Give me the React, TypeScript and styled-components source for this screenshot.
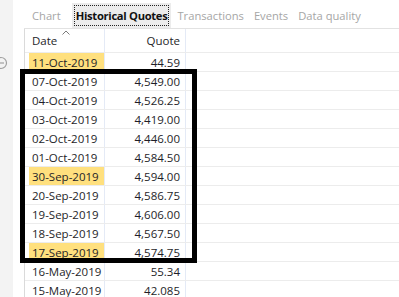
import styled, { createGlobalStyle } from "styled-components";

const GlobalStyle = createGlobalStyle`
  html, body {
    margin: 0;
    padding: 0;
    background: #ffffff;
  }
  body {
    font-family: "Open Sans", "Noto Sans", sans-serif;
    font-size: 11.5px;
    color: #1e1e28;
  }
`;

const Page = styled.div`
  position: relative;
  display: flex;
  width: 399px;
  height: 297px;
  overflow: hidden;
`;

const Rail = styled.aside`
  width: 13px;
  flex-shrink: 0;
  background: #f3f3f3;
  padding-top: 56px;
  box-sizing: border-box;
`;

const RailIcon = styled.svg`
  display: block;
  margin-left: -6px;
`;

const Gutter = styled.div`
  width: 11px;
  flex-shrink: 0;
`;

const Main = styled.main`
  flex: 1;
  display: flex;
  flex-direction: column;
  min-width: 0;
`;

const TabBar = styled.nav`
  height: 28px;
  display: flex;
  align-items: flex-end;
  padding-left: 3px;
  border-bottom: 1px solid #e2e2e2;
  flex-shrink: 0;
  font-size: 11.2px;
`;

const Tab = styled.div<{ $active?: boolean }>`
  height: 25px;
  display: flex;
  align-items: center;
  white-space: nowrap;
  padding: ${(p) => (p.$active ? "0 2px" : "0 5px")};
  margin: ${(p) => (p.$active ? "0 1px 0 6px" : "0")};
  background: ${(p) => (p.$active ? "#ececec" : "transparent")};
  color: ${(p) => (p.$active ? "#111111" : "#a6a6a6")};
  font-weight: ${(p) => (p.$active ? 700 : 400)};
  letter-spacing: ${(p) => (p.$active ? "-0.3px" : "0")};
`;

const Focus = styled.span`
  border: 1px dotted #222;
  padding: 0 1px;
  height: 19px;
  line-height: 19px;
`;

const Grid = styled.div`
  display: flex;
  flex-direction: column;
  border-left: 1px solid #dadada;
`;

const Row = styled.div<{ $header?: boolean }>`
  display: grid;
  grid-template-columns: 4px 76px 81px 1fr;
  height: ${(p) => (p.$header ? "23px" : "18px")};
  border-bottom: 1px solid #ececec;
  flex-shrink: 0;
`;

const Cell = styled.div<{ $right?: boolean; $mark?: boolean }>`
  display: flex;
  align-items: center;
  justify-content: ${(p) => (p.$right ? "flex-end" : "flex-start")};
  padding: ${(p) => (p.$right ? "0 5px 0 0" : "0 0 0 3px")};
  border-right: 1px solid #e4eaf6;
  background: ${(p) => (p.$mark ? "#ffe07e" : "transparent")};
  white-space: nowrap;
  position: relative;
`;

const Spacer = styled.div``;

const Filler = styled.div``;

const SortMark = styled.svg`
  position: absolute;
  top: 1px;
  left: 33px;
`;

const Annotation = styled.div`
  position: absolute;
  left: 20px;
  top: 69px;
  width: 177px;
  height: 194px;
  border: 5px solid #000;
  box-sizing: border-box;
  pointer-events: none;
`;

const quotes: [string, string, boolean?][] = [
  ["11-Oct-2019", "44.59", true],
  ["07-Oct-2019", "4,549.00"],
  ["04-Oct-2019", "4,526.25"],
  ["03-Oct-2019", "4,419.00"],
  ["02-Oct-2019", "4,446.00"],
  ["01-Oct-2019", "4,584.50"],
  ["30-Sep-2019", "4,594.00", true],
  ["20-Sep-2019", "4,586.75"],
  ["19-Sep-2019", "4,606.00"],
  ["18-Sep-2019", "4,567.50"],
  ["17-Sep-2019", "4,574.75", true],
  ["16-May-2019", "55.34"],
  ["15-May-2019", "42.085"],
];

function App() {
  return (
    <Page>
      <GlobalStyle />
      <Rail>
        <RailIcon width="14" height="14" viewBox="0 0 14 14">
          <circle cx="7" cy="7" r="5.5" fill="none" stroke="#a0a0a0" strokeWidth="1.2" />
          <path d="M4 7h6" stroke="#a0a0a0" strokeWidth="1.2" />
        </RailIcon>
      </Rail>
      <Gutter />
      <Main>
        <TabBar>
          <Tab>Chart</Tab>
          <Tab $active>
            <Focus>Historical Quotes</Focus>
          </Tab>
          <Tab>Transactions</Tab>
          <Tab>Events</Tab>
          <Tab>Data quality</Tab>
        </TabBar>
        <Grid>
          <Row $header>
            <Spacer />
            <Cell>
              <SortMark width="8" height="5" viewBox="0 0 8 5">
                <path d="M0.5 4.5L4 1l3.5 3.5" fill="none" stroke="#7a7a7a" strokeWidth="1" />
              </SortMark>
              Date
            </Cell>
            <Cell $right>Quote</Cell>
            <Filler />
          </Row>
          {quotes.map(([date, quote, mark]) => (
            <Row key={date}>
              <Spacer />
              <Cell $mark={mark}>{date}</Cell>
              <Cell $right>{quote}</Cell>
              <Filler />
            </Row>
          ))}
        </Grid>
      </Main>
      <Annotation />
    </Page>
  );
}

export default App;
